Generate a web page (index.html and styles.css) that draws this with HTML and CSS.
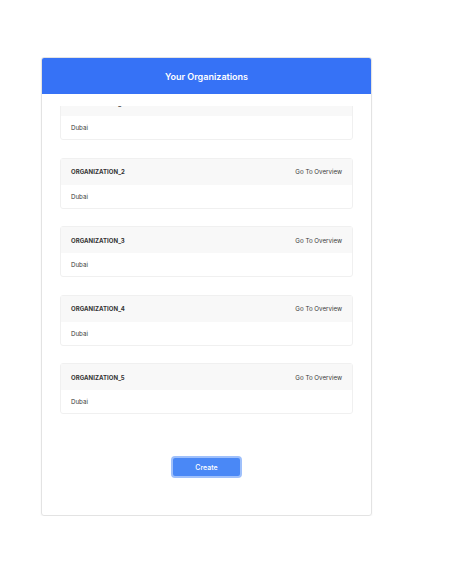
FILE: index.html
```html
<!DOCTYPE html>
<html lang="en">
<head>
<meta charset="utf-8">
<title>Your Organizations</title>
<link rel="stylesheet" href="styles.css">
</head>
<body>
<main class="page">
  <section class="card">
    <header class="card-header">Your Organizations</header>
    <div class="card-body">
      <div class="org-list" id="orgList">
        <div class="org">
          <div class="org-head"><span class="org-name">ORGANIZATION_1</span><a class="org-link" href="#">Go To Overview</a></div>
          <div class="org-city">Dubai</div>
        </div>
        <div class="org">
          <div class="org-head"><span class="org-name">ORGANIZATION_2</span><a class="org-link" href="#">Go To Overview</a></div>
          <div class="org-city">Dubai</div>
        </div>
        <div class="org">
          <div class="org-head"><span class="org-name">ORGANIZATION_3</span><a class="org-link" href="#">Go To Overview</a></div>
          <div class="org-city">Dubai</div>
        </div>
        <div class="org">
          <div class="org-head"><span class="org-name">ORGANIZATION_4</span><a class="org-link" href="#">Go To Overview</a></div>
          <div class="org-city">Dubai</div>
        </div>
        <div class="org">
          <div class="org-head"><span class="org-name">ORGANIZATION_5</span><a class="org-link" href="#">Go To Overview</a></div>
          <div class="org-city">Dubai</div>
        </div>
      </div>
      <div class="actions">
        <button class="btn-create" type="button">Create</button>
      </div>
    </div>
  </section>
</main>
<script src="script.js"></script>
</body>
</html>
```
FILE: styles.css
```css
* { box-sizing: border-box; }
html, body { margin: 0; padding: 0; background: #ffffff; }
body {
  font-family: Inter, "Noto Sans", "Liberation Sans", sans-serif;
  color: #2b2b2b;
}
.page {
  padding: 57px 0 0 41px;
}
.card {
  width: 331px;
  height: 459px;
  border: 1px solid #e3e3e3;
  border-radius: 3px;
  box-shadow: 0 1px 2px rgba(0,0,0,0.06);
  overflow: hidden;
  display: flex;
  flex-direction: column;
}
.card-header {
  height: 36px;
  flex: none;
  background: #3672f6;
  color: #ffffff;
  font-weight: 600;
  font-size: 9px;
  display: flex;
  align-items: center;
  justify-content: center;
}
.card-body {
  padding: 12px 18px 0 18px;
}
.org-list {
  height: 308px;
  overflow-y: auto;
  scrollbar-width: none;
  display: flex;
  flex-direction: column;
  gap: 17.5px;
}
.org-list::-webkit-scrollbar { display: none; }
.org {
  flex: none;
  border: 1px solid #f0f0f0;
  border-radius: 3px;
  background: #ffffff;
}
.org-head {
  height: 26px;
  background: #f8f8f8;
  display: flex;
  align-items: center;
  justify-content: space-between;
  padding: 0 10px 0 10px;
}
.org-name {
  font-size: 6px;
  font-weight: 700;
  letter-spacing: 0.05px;
  color: #333333;
}
.org-link {
  font-size: 6.2px;
  color: #3a3a3a;
  text-decoration: none;
}
.org-city {
  height: 23px;
  display: flex;
  align-items: center;
  padding: 0 10px;
  font-size: 6.2px;
  color: #3a3a3a;
}
.actions {
  display: flex;
  justify-content: center;
  padding-top: 42px;
}
.btn-create {
  width: 71px;
  height: 22px;
  background: #4a88f6;
  color: #ffffff;
  border: 2px solid #9fc0fb;
  border-radius: 4px;
  font-family: inherit;
  font-size: 7px;
  font-weight: 500;
}
```
FILE: script.js
```js
var list = document.getElementById('orgList');
list.scrollTop = list.scrollHeight;
```
